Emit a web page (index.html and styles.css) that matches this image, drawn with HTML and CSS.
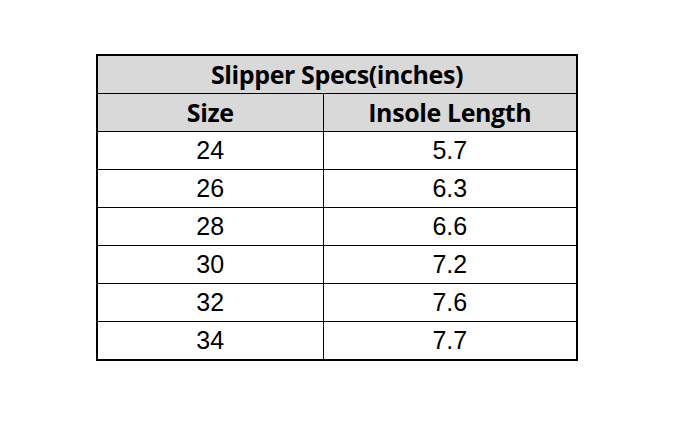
FILE: index.html
```html
<!DOCTYPE html>
<html>
<head>
<meta charset="utf-8">
<link rel="stylesheet" href="styles.css">
</head>
<body>
<div class="page">
  <table class="specs">
    <colgroup>
      <col class="col-size">
      <col class="col-len">
    </colgroup>
    <thead>
      <tr><th colspan="2" class="title">Slipper Specs(inches)</th></tr>
      <tr><th>Size</th><th>Insole Length</th></tr>
    </thead>
    <tbody>
      <tr><td>24</td><td>5.7</td></tr>
      <tr><td>26</td><td>6.3</td></tr>
      <tr><td>28</td><td>6.6</td></tr>
      <tr><td>30</td><td>7.2</td></tr>
      <tr><td>32</td><td>7.6</td></tr>
      <tr><td>34</td><td>7.7</td></tr>
    </tbody>
  </table>
</div>
</body>
</html>
```
FILE: styles.css
```css
html, body {
  margin: 0;
  padding: 0;
  background: #ffffff;
}
.page {
  padding: 54px 0 0 96px;
}
.specs {
  border-collapse: collapse;
  border: 2px solid #000;
  width: 480px;
  table-layout: fixed;
}
.col-size { width: 226px; }
.col-len { width: 254px; }
.specs th, .specs td {
  border: 1px solid #000;
  padding: 0;
  height: 37px;
  text-align: center;
  vertical-align: middle;
  color: #000;
  line-height: 1;
}
.specs th {
  background: #d9d9d9;
  font-family: "Open Sans", "Liberation Sans", sans-serif;
  font-weight: 700;
  font-size: 25px;
  letter-spacing: -0.4px;
}
.specs td {
  font-family: "Liberation Sans", Arial, sans-serif;
  font-size: 25px;
}
```
